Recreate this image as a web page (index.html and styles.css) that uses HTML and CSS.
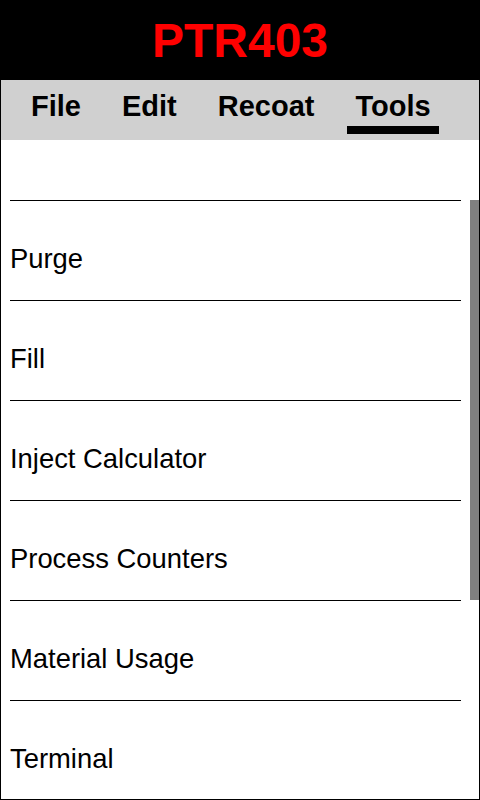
FILE: index.html
```html
<!DOCTYPE html>
<html>
<head>
<meta charset="utf-8">
<link rel="stylesheet" href="styles.css">
</head>
<body>
<div class="app">
  <header class="header">PTR403</header>
  <nav class="tabs">
    <span class="tab">File</span>
    <span class="tab">Edit</span>
    <span class="tab">Recoat</span>
    <span class="tab active">Tools</span>
  </nav>
  <div class="list-wrap">
    <ul class="list">
      <li class="spacer"></li>
      <li class="item">Purge</li>
      <li class="item">Fill</li>
      <li class="item">Inject Calculator</li>
      <li class="item">Process Counters</li>
      <li class="item">Material Usage</li>
      <li class="item">Terminal</li>
    </ul>
    <div class="thumb"></div>
  </div>
</div>
</body>
</html>
```

FILE: styles.css
```css
* { box-sizing: border-box; }
html, body { margin: 0; padding: 0; background: #fff; }
body { font-family: "Liberation Sans", Arial, sans-serif; color: #000; }

.app {
  width: 480px;
  height: 800px;
  border: 1px solid #000;
  display: flex;
  flex-direction: column;
  overflow: hidden;
}

.header {
  height: 79px;
  background: #000;
  color: #ff0000;
  font-weight: bold;
  font-size: 48px;
  line-height: 48px;
  text-align: center;
  padding-top: 16px;
  flex: none;
}

.tabs {
  height: 60px;
  background: #d0d0d0;
  display: flex;
  align-items: flex-end;
  padding: 0 0 6px 22px;
  gap: 25px;
  flex: none;
}

.tab {
  font-weight: bold;
  font-size: 29px;
  line-height: 32px;
  padding: 0 8px 4px;
  border-bottom: 8px solid transparent;
}
.tab.active { border-bottom-color: #000; }

.list-wrap {
  position: relative;
  flex: 1;
  overflow: hidden;
}

.list {
  list-style: none;
  margin: 0;
  padding: 0 18px 0 9px;
}

.spacer {
  height: 61px;
  border-bottom: 1px solid #000;
}

.item {
  height: 100px;
  border-bottom: 1px solid #000;
  font-size: 27.4px;
  line-height: 30px;
  padding-top: 43px;
}

.thumb {
  position: absolute;
  right: 0;
  top: 60px;
  width: 9px;
  height: 400px;
  background: #808080;
}
```
